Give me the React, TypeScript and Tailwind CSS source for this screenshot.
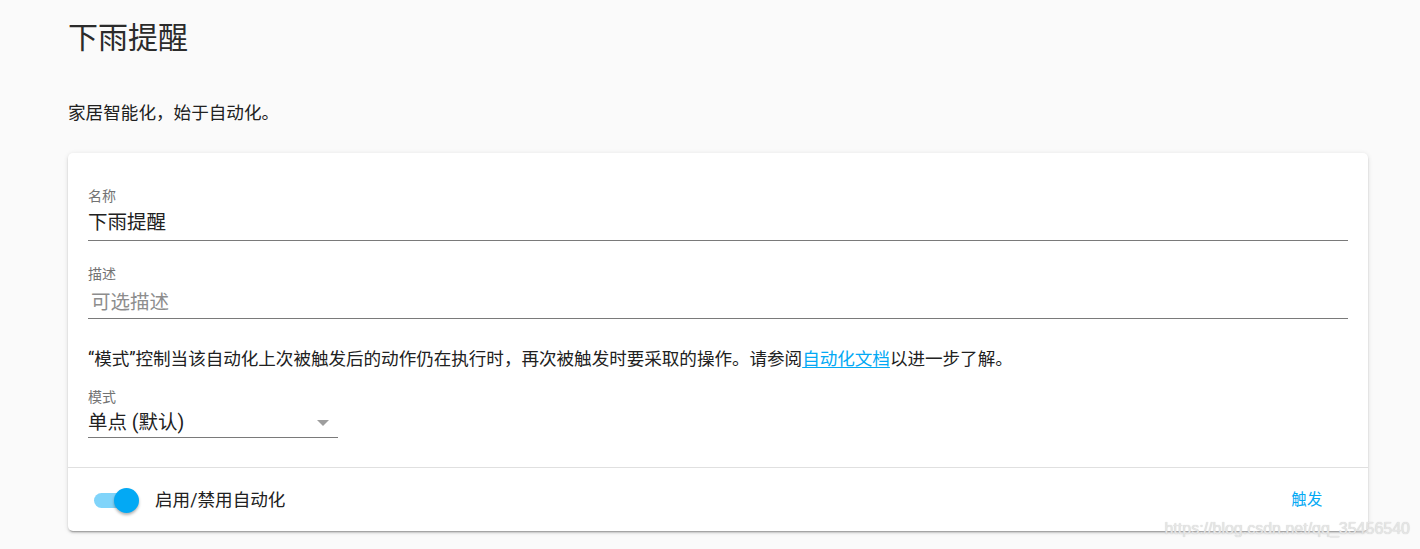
import React from 'react'

const font = "font-['Roboto','Noto_Sans_CJK_SC',sans-serif]"

function Field({ label, value, placeholder }: { label: string; value?: string; placeholder?: string }) {
    return (
        <div className={`border-b border-[#7a7a7a] ${value ? 'pb-[5px]' : 'pb-[3px]'}`}>
            <div className="text-[14px] leading-[18px] text-[#737373]">{label}</div>
            <div className={`text-[19.5px] leading-[24px] ${value ? 'mt-[6px] text-[#212121]' : 'mt-[8px] text-[#8d8d8d] pl-[3px]'}`}>
                {value ?? placeholder}
            </div>
        </div>
    )
}

function Toggle() {
    return (
        <div className="relative w-[46px] h-[26px] flex items-center">
            <div className="w-[40px] h-[15px] rounded-full bg-[#80d4fa]" />
            <div className="absolute left-[20px] top-0 w-[25px] h-[25px] rounded-full bg-[#03a9f4] shadow-[0_2px_3px_rgba(0,0,0,0.3)]" />
        </div>
    )
}

export default function App() {
    return (
        <div className={`relative min-h-[549px] bg-[#fafafa] ${font} overflow-hidden`}>
            <div className="pl-[68px] pt-[18px]">
                <h1 className="text-[30px] leading-[40px] text-[#2b2b2b] font-normal">下雨提醒</h1>
                <p className="mt-[42px] text-[17.6px] leading-[26px] text-[#212121]">家居智能化，始于自动化。</p>

                <div className="mt-[27px] w-[1300px] bg-white rounded-[5px] shadow-[0_2px_2px_0_rgba(0,0,0,0.14),0_1px_5px_0_rgba(0,0,0,0.12),0_3px_1px_-2px_rgba(0,0,0,0.2)]">
                    <div className="px-[20px] pt-[34px] pb-[29px]">
                        <Field label="名称" value="下雨提醒" />
                        <div className="mt-[24px]">
                            <Field label="描述" placeholder="可选描述" />
                        </div>
                        <p className="mt-[27px] text-[17.6px] tracking-[-0.05px] leading-[26px] text-[#212121]">
                            “模式”控制当该自动化上次被触发后的动作仍在执行时，再次被触发时要采取的操作。请参阅
                            <a className="text-[#03a9f4] underline underline-offset-2">自动化文档</a>
                            以进一步了解。
                        </p>
                        <div className="mt-[16px] w-[250px] border-b border-[#7a7a7a] pb-[2px]">
                            <div className="text-[14px] leading-[18px] text-[#737373]">模式</div>
                            <div className="mt-[5px] flex items-center justify-between pr-[8px]">
                                <span className="text-[19.5px] leading-[24px] text-[#212121]">单点 (默认)</span>
                                <svg width="14" height="7" viewBox="0 0 14 7" className="mt-[1px]">
                                    <path d="M1 0 L13 0 L7 6 Z" fill="#9e9e9e" />
                                </svg>
                            </div>
                        </div>
                    </div>
                    <div className="border-t border-[#e0e0e0] h-[64px] flex items-center pl-[26px] pr-[45px] pt-[2px]">
                        <Toggle />
                        <span className="ml-[15px] text-[17.6px] text-[#212121]">启用/禁用自动化</span>
                        <span className="ml-auto text-[15.4px] text-[#03a9f4] tracking-[0.5px]">触发</span>
                    </div>
                </div>
            </div>

            <div className="absolute right-[10px] top-[517px] font-['Liberation_Sans',sans-serif] text-[16px] leading-[24px] text-[#e6e6e6] [text-shadow:0_0_1px_#c4c4c4]">
                https://blog.csdn.net/qq_35456540
            </div>
        </div>
    )
}
